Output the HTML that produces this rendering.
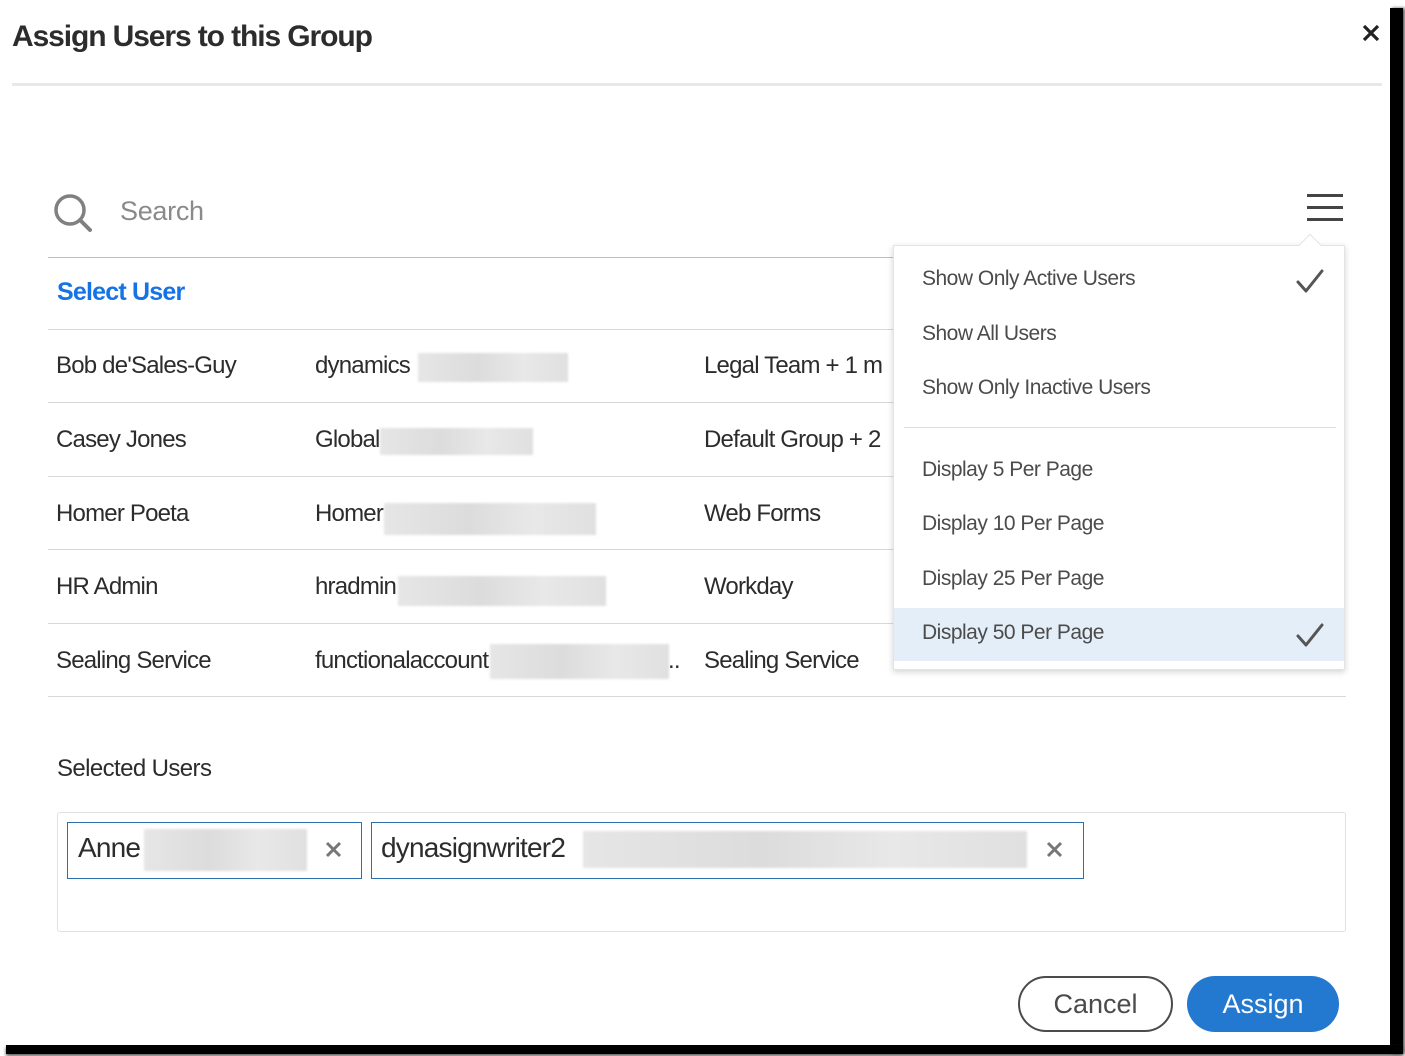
<!DOCTYPE html>
<html><head><meta charset="utf-8"><style>
*{margin:0;padding:0;box-sizing:border-box}
body{width:1405px;height:1056px;background:#fff;position:relative;overflow:hidden;font-family:"Liberation Sans",sans-serif;color:#2c2c2c}
.a{position:absolute;white-space:nowrap}
.t{font-size:24px;letter-spacing:-0.8px;color:#2c2c2c;line-height:28px}
.hl{position:absolute;height:1px;background:#d8d8d8}
.blur{position:absolute;background:linear-gradient(90deg,#e6e6e6,#dcdcdc 40%,#e8e8e8 70%,#e0e0e0);filter:blur(1px)}
.m{position:absolute;left:28px;font-size:21px;letter-spacing:-0.5px;color:#4b4b4b;line-height:26px}
</style></head><body>
<div class="a" style="right:2px;top:8px;width:13px;height:1046px;background:#000;box-shadow:2px 0 3px #555"></div>
<div class="a" style="left:6px;bottom:2px;width:1397px;height:9px;background:#000;box-shadow:0 2px 3px #555"></div>
<div class="a" style="left:0;top:0;width:1390px;height:1045px;background:#fff"></div>

<div class="a" style="left:12px;top:20px;font-size:30px;font-weight:bold;letter-spacing:-1.1px;color:#2c2c2c">Assign Users to this Group</div>
<svg class="a" style="left:1362px;top:24px" width="18" height="18"><path d="M2 2L16 16M16 2L2 16" stroke="#222" stroke-width="3.2"/></svg>
<div class="hl" style="left:12px;top:83px;width:1370px;height:3px;background:#e8e8e8"></div>

<svg class="a" style="left:53px;top:193px" width="42" height="42" viewBox="0 0 42 42"><circle cx="17" cy="17" r="14" fill="none" stroke="#808080" stroke-width="3.5"/><line x1="27" y1="27" x2="37" y2="37" stroke="#808080" stroke-width="4" stroke-linecap="round"/></svg>
<div class="a" style="left:120px;top:196px;font-size:27px;color:#8a8a8a;letter-spacing:-0.3px">Search</div>
<div class="a" style="left:1307px;top:194px;width:36px;height:3px;background:#444;box-shadow:0 12px 0 #444,0 24px 0 #444"></div>
<div class="hl" style="left:48px;top:257px;width:845px;background:#bdbdbd"></div>

<div class="a" style="left:57px;top:278px;font-size:25px;font-weight:bold;color:#1473e6;letter-spacing:-0.8px">Select User</div>

<div class="hl" style="left:48px;top:329px;width:845px"></div>
<div class="hl" style="left:48px;top:402px;width:845px"></div>
<div class="hl" style="left:48px;top:476px;width:845px"></div>
<div class="hl" style="left:48px;top:549px;width:845px"></div>
<div class="hl" style="left:48px;top:623px;width:845px"></div>
<div class="hl" style="left:48px;top:696px;width:1298px"></div>

<div class="a t" style="left:56px;top:352px">Bob de'Sales-Guy</div>
<div class="a t" style="left:315px;top:352px">dynamics</div>
<div class="blur" style="left:418px;top:353px;width:150px;height:29px"></div>
<div class="a t" style="left:704px;top:352px">Legal Team + 1 m</div>

<div class="a t" style="left:56px;top:426px">Casey Jones</div>
<div class="a t" style="left:315px;top:426px">Global</div>
<div class="blur" style="left:380px;top:428px;width:153px;height:27px"></div>
<div class="a t" style="left:704px;top:426px">Default Group + 2</div>

<div class="a t" style="left:56px;top:500px">Homer Poeta</div>
<div class="a t" style="left:315px;top:500px">Homer</div>
<div class="blur" style="left:384px;top:503px;width:212px;height:32px"></div>
<div class="a t" style="left:704px;top:500px">Web Forms</div>

<div class="a t" style="left:56px;top:573px">HR Admin</div>
<div class="a t" style="left:315px;top:573px">hradmin</div>
<div class="blur" style="left:398px;top:576px;width:208px;height:30px"></div>
<div class="a t" style="left:704px;top:573px">Workday</div>

<div class="a t" style="left:56px;top:647px">Sealing Service</div>
<div class="a t" style="left:315px;top:647px">functionalaccount</div>
<div class="blur" style="left:490px;top:644px;width:179px;height:35px"></div>
<div class="a t" style="left:668px;top:647px">..</div>
<div class="a t" style="left:704px;top:647px">Sealing Service</div>

<div class="a" style="left:893px;top:245px;width:452px;height:425px;background:#fff;border:1px solid #e4e4e4;box-shadow:0 2px 6px rgba(0,0,0,.18)">
 <div class="a" style="left:408px;top:-9px;width:16px;height:16px;background:#fff;transform:rotate(45deg);border-left:1px solid #e4e4e4;border-top:1px solid #e4e4e4"></div>
 <div class="m" style="top:20px">Show Only Active Users</div>
 <svg class="a" style="left:400px;top:20px" width="32" height="30"><path d="M4 16 L12 25 L28 5" fill="none" stroke="#555" stroke-width="3" stroke-linecap="round" stroke-linejoin="round"/></svg>
 <div class="m" style="top:75px">Show All Users</div>
 <div class="m" style="top:129px">Show Only Inactive Users</div>
 <div class="a" style="left:10px;top:181px;width:432px;height:1px;background:#ddd"></div>
 <div class="m" style="top:211px">Display 5 Per Page</div>
 <div class="m" style="top:265px">Display 10 Per Page</div>
 <div class="m" style="top:320px">Display 25 Per Page</div>
 <div class="a" style="left:0;top:362px;width:450px;height:53px;background:#e4eef8"></div>
 <div class="m" style="top:374px">Display 50 Per Page</div>
 <svg class="a" style="left:400px;top:374px" width="32" height="30"><path d="M4 16 L12 25 L28 5" fill="none" stroke="#555" stroke-width="3" stroke-linecap="round" stroke-linejoin="round"/></svg>
</div>

<div class="a" style="left:57px;top:755px;font-size:24px;letter-spacing:-0.6px;color:#2c2c2c">Selected Users</div>
<div class="a" style="left:57px;top:812px;width:1289px;height:120px;border:1px solid #e2e2e2;border-radius:3px"></div>
<div class="a" style="left:67px;top:822px;width:295px;height:57px;border:1px solid #2d6fae"></div>
<div class="a" style="left:78px;top:832px;font-size:28px;letter-spacing:-0.8px;color:#2c2c2c">Anne</div>
<div class="blur" style="left:144px;top:829px;width:163px;height:42px"></div>
<svg class="a" style="left:325px;top:841px" width="17" height="17"><path d="M2 2L15 15M15 2L2 15" stroke="#777" stroke-width="3"/></svg>
<div class="a" style="left:371px;top:822px;width:713px;height:57px;border:1px solid #2d6fae"></div>
<div class="a" style="left:381px;top:832px;font-size:28px;letter-spacing:-0.8px;color:#2c2c2c">dynasignwriter2</div>
<div class="blur" style="left:583px;top:831px;width:444px;height:37px"></div>
<svg class="a" style="left:1046px;top:841px" width="17" height="17"><path d="M2 2L15 15M15 2L2 15" stroke="#777" stroke-width="3"/></svg>

<div class="a" style="left:1018px;top:976px;width:155px;height:56px;border:2px solid #4b4b4b;border-radius:28px;font-size:27px;text-align:center;line-height:52px;color:#4b4b4b">Cancel</div>
<div class="a" style="left:1187px;top:976px;width:152px;height:56px;background:#2378d0;border-radius:28px;font-size:27px;text-align:center;line-height:56px;color:#fff">Assign</div>
</body></html>
